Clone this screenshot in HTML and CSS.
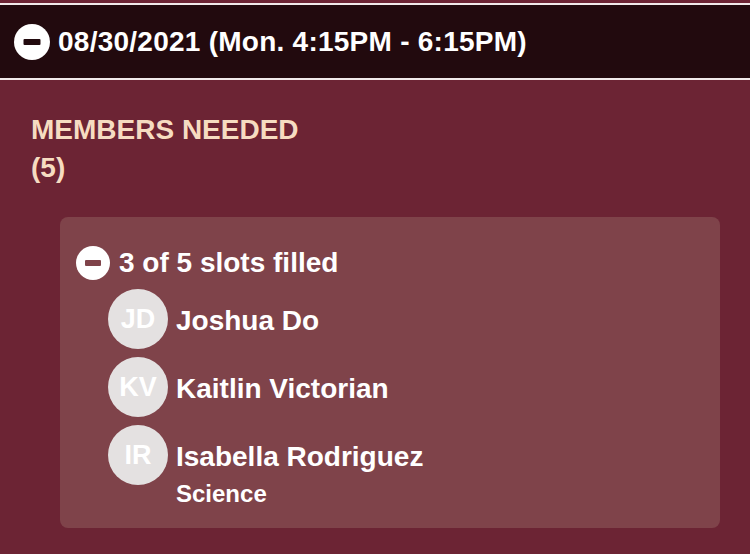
FILE: index.html
```html
<!DOCTYPE html>
<html lang="en">
<head>
<meta charset="utf-8">
<title>Shift</title>
<link rel="stylesheet" href="styles.css">
</head>
<body>
  <header class="shift-header">
    <svg class="toggle toggle-lg" viewBox="0 0 36 36" aria-hidden="true">
      <circle cx="18" cy="18" r="18" fill="#ffffff"/>
      <rect x="9.5" y="15" width="17" height="6" rx="1" fill="#220a0e"/>
    </svg>
    <span class="shift-title">08/30/2021 (Mon. 4:15PM - 6:15PM)</span>
  </header>

  <section class="needed">
    <div class="needed-label">MEMBERS NEEDED</div>
    <div class="needed-count">(5)</div>
  </section>

  <section class="slots-card">
    <div class="slots-head">
      <svg class="toggle toggle-sm" viewBox="0 0 34 34" aria-hidden="true">
        <circle cx="17" cy="17" r="17" fill="#ffffff"/>
        <rect x="9" y="14" width="16" height="6" rx="1" fill="#7f434a"/>
      </svg>
      <span class="slots-text">3 of 5 slots filled</span>
    </div>
    <ul class="members">
      <li class="member">
        <div class="avatar">JD</div>
        <div class="info"><div class="name">Joshua Do</div></div>
      </li>
      <li class="member">
        <div class="avatar">KV</div>
        <div class="info"><div class="name">Kaitlin Victorian</div></div>
      </li>
      <li class="member">
        <div class="avatar">IR</div>
        <div class="info">
          <div class="name">Isabella Rodriguez</div>
          <div class="sub">Science</div>
        </div>
      </li>
    </ul>
  </section>
</body>
</html>
```

FILE: styles.css
```css
* {
  box-sizing: border-box;
}

html, body {
  margin: 0;
  padding: 0;
}

body {
  background: #6c2434;
  font-family: "Liberation Sans", Arial, Helvetica, sans-serif;
  font-weight: 700;
  color: #ffffff;
  width: 750px;
  height: 554px;
  overflow: hidden;
}

.shift-header {
  margin-top: 3px;
  height: 77px;
  background: #220a0e;
  border-top: 2px solid #f1eaea;
  border-bottom: 2px solid #f1eaea;
  display: flex;
  align-items: center;
  gap: 8px;
  padding-left: 14px;
}

.toggle {
  display: block;
  flex: none;
}

.toggle-lg {
  width: 36px;
  height: 36px;
  margin-top: 1px;
}

.toggle-sm {
  width: 34px;
  height: 34px;
}

.shift-title {
  font-size: 28px;
  letter-spacing: 0.25px;
  line-height: 34px;
  color: #ffffff;
}

.needed {
  padding: 31px 0 0 31px;
  color: #f6dcc1;
  font-size: 28px;
  line-height: 38px;
}

.slots-card {
  margin: 30px 0 0 60px;
  width: 660px;
  background: #7f434a;
  border-radius: 8px;
  padding: 29px 16px 25px 16px;
}

.slots-head {
  display: flex;
  align-items: center;
  gap: 9px;
  height: 34px;
}

.slots-text {
  font-size: 28px;
  line-height: 34px;
}

.members {
  list-style: none;
  margin: 9px 0 0 32px;
  padding: 0;
  display: flex;
  flex-direction: column;
  gap: 8px;
}

.member {
  display: flex;
  gap: 8px;
  align-items: flex-start;
}

.avatar {
  width: 60px;
  height: 60px;
  border-radius: 50%;
  background: #e4e1e1;
  color: #ffffff;
  font-size: 27px;
  display: flex;
  align-items: center;
  justify-content: center;
  flex: none;
}

.info {
  display: flex;
  flex-direction: column;
}

.name {
  font-size: 28px;
  line-height: 60px;
  padding-top: 2px;
  margin-bottom: -2px;
}

.sub {
  font-size: 24px;
  line-height: 18px;
}
```
